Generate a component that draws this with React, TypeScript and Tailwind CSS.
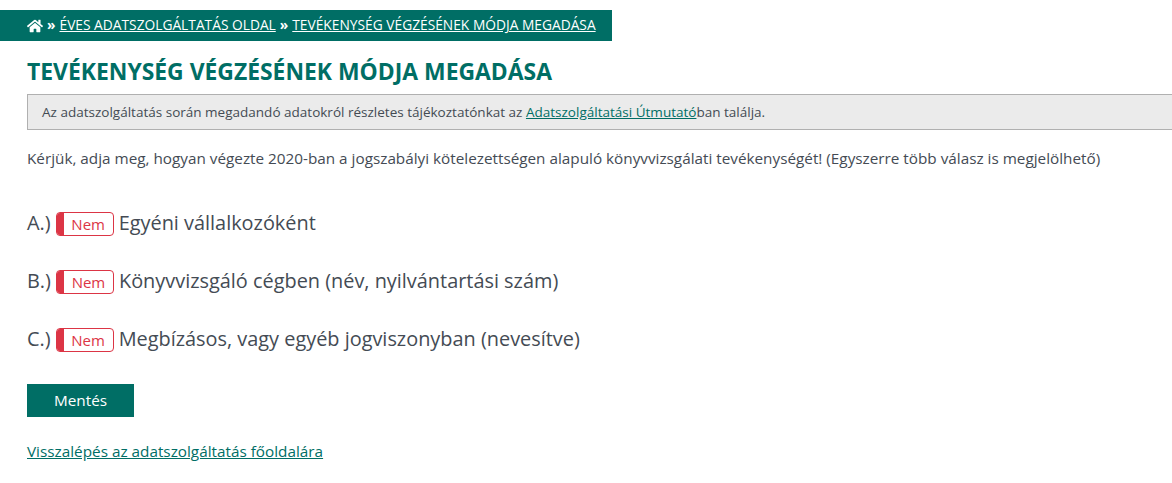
import { FaHome } from "react-icons/fa";

const options = [
  { letter: "A.)", label: "Egyéni vállalkozóként" },
  { letter: "B.)", label: "Könyvvizsgáló cégben (név, nyilvántartási szám)" },
  { letter: "C.)", label: "Megbízásos, vagy egyéb jogviszonyban (nevesítve)" },
];

function Toggle() {
  return (
    <span className="mt-[2px] inline-flex h-6 w-[58px] overflow-hidden rounded-[4px] border border-[#dc3545] bg-white">
      <span className="w-[7px] bg-[#dc3545]" />
      <span className="flex-1 text-center text-[15px] leading-[23px] text-[#dc3545]">Nem</span>
    </span>
  );
}

export default function App() {
  return (
    <div className="h-[483px] w-[1172px] overflow-hidden bg-white pt-[10px] font-['Open_Sans',sans-serif] text-[#444b54]">
      <div className="flex h-[31px] w-[612px] items-center bg-[#006e65] pl-[27px] text-[13.78px] text-white">
        <FaHome className="mr-1 text-[16px]" />
        <span className="mr-1 font-bold">»</span>
        <a className="underline">ÉVES ADATSZOLGÁLTATÁS OLDAL</a>
        <span className="mx-1 font-bold">»</span>
        <a className="underline">TEVÉKENYSÉG VÉGZÉSÉNEK MÓDJA MEGADÁSA</a>
      </div>

      <div className="pl-[27px]">
        <h1 className="mt-[14px] text-[22.9px] leading-[34px] font-bold text-[#006e65]">
          TEVÉKENYSÉG VÉGZÉSÉNEK MÓDJA MEGADÁSA
        </h1>
        <div className="mt-[5px] flex h-[36px] items-center border-y border-l border-[#b0b0b0] bg-[#ebebeb] pl-[14px] text-[13.52px]">
          <span>
            Az adatszolgáltatás során megadandó adatokról részletes tájékoztatónkat az{" "}
            <a className="text-[#006e65] underline">Adatszolgáltatási Útmutató</a>ban találja.
          </span>
        </div>
        <p className="mt-[18px] text-[15.29px] leading-[20px]">
          Kérjük, adja meg, hogyan végezte 2020-ban a jogszabályi kötelezettségen alapuló könyvvizsgálati tevékenységét! (Egyszerre több válasz is megjelölhető)
        </p>

        <div className="mt-[40px] flex flex-col gap-[29px]">
          {options.map((o) => (
            <div key={o.letter} className="flex h-[29px] items-center gap-[5px] text-[19.9px]">
              <span>{o.letter}</span>
              <Toggle />
              <span>{o.label}</span>
            </div>
          ))}
        </div>

        <button className="mt-[31px] block h-[33px] w-[107px] bg-[#006e65] text-[15.3px] text-white">Mentés</button>
        <a className="mt-[24px] block text-[15.3px] leading-[20px] text-[#006e65] underline">
          Visszalépés az adatszolgáltatás főoldalára
        </a>
      </div>
    </div>
  );
}
